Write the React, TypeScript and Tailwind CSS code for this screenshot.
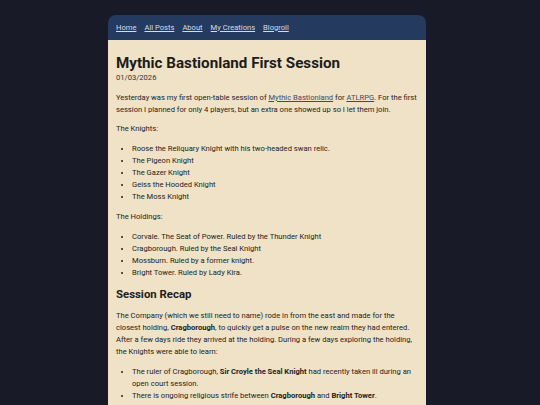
export default function App() {
  const navLinks = ['Home', 'All Posts', 'About', 'My Creations', 'Blogroll']
  const knights = [
    'Roose the Reliquary Knight with his two-headed swan relic.',
    'The Pigeon Knight',
    'The Gazer Knight',
    'Geiss the Hooded Knight',
    'The Moss Knight',
  ]
  const holdings = [
    'Corvale. The Seat of Power. Ruled by the Thunder Knight',
    'Cragborough. Ruled by the Seal Knight',
    'Mossburn. Ruled by a former knight.',
    'Bright Tower. Ruled by Lady Kira.',
  ]

  return (
    <div className="min-h-screen bg-[#181b27] pt-[15px] font-['Roboto',sans-serif]">
      <div className="ml-[108px] w-[318px] overflow-hidden rounded-t-[8px]">
        {/* Nav */}
        <nav className="flex h-[25px] items-center gap-[8px] bg-[#243a5e] px-[8px] text-[7.6px] text-[#d3dcea]">
          {navLinks.map((l) => (
            <a key={l} href="#" className="underline">
              {l}
            </a>
          ))}
        </nav>

        {/* Post */}
        <article className="bg-[#f0e2c6] px-[8px] pb-[20px] pt-[14px] text-[7.6px] leading-[12px] text-[#222]">
          <h1 className="text-[15.2px] font-bold leading-[18px] text-[#1c1c1c]">Mythic Bastionland First Session</h1>
          <div className="mt-[1px] leading-[10px] text-[#333]">01/03/2026</div>

          <p className="mt-[9px]">
            Yesterday was my first open-table session of{' '}
            <a href="#" className="text-[#3e4a60] underline">Mythic Bastionland</a> for{' '}
            <a href="#" className="text-[#3e4a60] underline">ATLRPG</a>. For the first session I planned for only 4
            players, but an extra one showed up so I let them join.
          </p>

          <p className="mt-[7px]">The Knights:</p>
          <ul className="mt-[8px] list-disc pl-[16px]">
            {knights.map((k) => (
              <li key={k}>{k}</li>
            ))}
          </ul>

          <p className="mt-[8px]">The Holdings:</p>
          <ul className="mt-[8px] list-disc pl-[16px]">
            {holdings.map((h) => (
              <li key={h}>{h}</li>
            ))}
          </ul>

          <h2 className="mt-[8px] text-[11.4px] font-bold leading-[14px] text-[#1c1c1c]">Session Recap</h2>
          <p className="mt-[9px]">
            The Company (which we still need to name) rode in from the east and made for the closest holding,{' '}
            <b>Cragborough</b>, to quickly get a pulse on the new realm they had entered. After a few days ride they
            arrived at the holding. During a few days exploring the holding, the Knights were able to learn:
          </p>
          <ul className="mr-[-10px] mt-[8px] list-disc pl-[16px]">
            <li>
              The ruler of Cragborough, <b>Sir Croyle the Seal Knight</b> had recently taken ill during an
              <br />
              open court session.
            </li>
            <li>
              There is ongoing religious strife between <b>Cragborough</b> and <b>Bright Tower</b>.
            </li>
          </ul>
        </article>
      </div>
    </div>
  )
}
